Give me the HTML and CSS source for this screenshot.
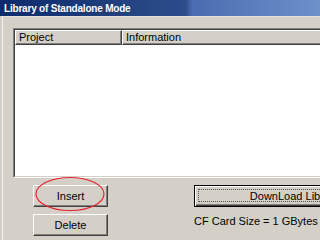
FILE: index.html
```html
<!DOCTYPE html>
<html>
<head>
<meta charset="utf-8">
<link rel="stylesheet" href="styles.css">
</head>
<body>
<div class="title">Library of Standalone Mode</div>
<div class="frame">
  <div class="list">
    <div class="list-inner">
      <div class="header">
        <div class="hcell project">Project</div>
        <div class="hcell info">Information</div>
      </div>
    </div>
  </div>
  <div class="actions">
    <div class="left-col">
      <div class="btn">Insert</div>
      <div class="btn">Delete</div>
    </div>
    <div class="right-col">
      <div class="btn default">DownLoad Library</div>
      <div class="cf">CF Card Size = 1 GBytes</div>
    </div>
  </div>
</div>
<svg class="mark" width="72" height="37" viewBox="0 0 72 37">
  <ellipse cx="36" cy="18" rx="34" ry="16.5" fill="none" stroke="#e8202a" stroke-width="1.2"/>
</svg>
</body>
</html>
```
FILE: styles.css
```css
html, body {
  margin: 0;
  padding: 0;
}
body {
  width: 320px;
  height: 240px;
  overflow: hidden;
  position: relative;
  background: #d4d0c8;
  font-family: "Liberation Sans", Arial, sans-serif;
  font-size: 11px;
  color: #000;
}
.title {
  height: 16px;
  box-sizing: border-box;
  padding: 2px 0 0 4px;
  line-height: 14px;
  font-size: 10px;
  letter-spacing: -0.2px;
  font-weight: bold;
  color: #fff;
  white-space: nowrap;
  background: linear-gradient(to right, #0c2a6c 0%, #23427f 40%, #2d4c8c 58%, #4a6cb0 60%, #6d91cb 100%);
}
.frame {
  margin-left: 2px;
  border-left: 1px solid #f4f2ee;
  border-top: 1px solid #e6e3dc;
  padding: 11px 0 0 10px;
  height: 224px;
  box-sizing: border-box;
  overflow: hidden;
}
.list {
  width: 330px;
  border: 1px solid;
  border-color: #808080 #fff #fff #808080;
}
.list-inner {
  height: 146px;
  border: 1px solid;
  border-color: #404040 #d4d0c8 #d4d0c8 #404040;
  background: #fff;
}
.header {
  display: flex;
  height: 15px;
}
.hcell {
  box-sizing: border-box;
  height: 15px;
  background: #d4d0c8;
  border-top: 1px solid #fff;
  border-left: 1px solid #fff;
  border-right: 1px solid #404040;
  border-bottom: 1px solid #404040;
  box-shadow: inset -1px -1px #808080;
  white-space: nowrap;
  line-height: 12px;
  padding-left: 3px;
}
.project {
  width: 107px;
}
.info {
  flex: 1;
}
.actions {
  display: flex;
  margin-top: 7px;
}
.left-col {
  margin-left: 20px;
  display: flex;
  flex-direction: column;
  gap: 7px;
}
.btn {
  width: 75px;
  height: 22px;
  box-sizing: border-box;
  border: 1px solid;
  border-color: #fff #404040 #404040 #fff;
  box-shadow: inset -1px -1px #808080;
  background: #d4d0c8;
  text-align: center;
  line-height: 20px;
  position: relative;
}
.right-col {
  margin-left: 86px;
  display: flex;
  flex-direction: column;
  min-width: 0;
}
.btn.default {
  width: 201px;
  flex-shrink: 0;
  height: 22px;
  border: 1px solid #000;
  box-shadow: inset 1px 1px #fff, inset -1px -1px #404040, inset -2px -2px #808080;
  white-space: nowrap;
}
.btn.default::after {
  content: "";
  position: absolute;
  left: 3px;
  top: 3px;
  right: 4px;
  bottom: 4px;
  border: 1px dotted #555;
}
.cf {
  margin-top: 8px;
  line-height: 13px;
  white-space: nowrap;
}
.mark {
  position: absolute;
  left: 34px;
  top: 176px;
}
```
